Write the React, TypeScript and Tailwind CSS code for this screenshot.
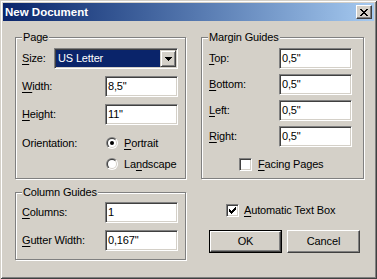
import React from "react";

const sunken =
  "border border-t-[#808080] border-l-[#808080] border-b-white border-r-white shadow-[inset_1px_1px_0_#404040,inset_-1px_-1px_0_#d4d0c8]";
const raised =
  "border border-t-white border-l-white border-b-[#404040] border-r-[#404040] shadow-[inset_-1px_-1px_0_#808080]";

function U({ children }: { children: React.ReactNode }) {
  return <span className="underline decoration-1 underline-offset-[2px]">{children}</span>;
}

function Edit({ value }: { value: string }) {
  return (
    <div className={`h-[21px] w-[73px] bg-white ${sunken} flex items-center pl-[2px]`}>{value}</div>
  );
}

function Pixels({ w, h, rows }: { w: number; h: number; rows: number[][][] }) {
  return (
    <svg width={w} height={h} viewBox={`0 0 ${w} ${h}`} shapeRendering="crispEdges">
      {rows.map((r, y) => r.map(([x, ww], i) => <rect key={`${y}-${i}`} x={x} y={y} width={ww} height={1} fill="#000" />))}
    </svg>
  );
}

const xRows = [
  [[0, 2], [6, 2]],
  [[1, 2], [5, 2]],
  [[2, 4]],
  [[3, 2]],
  [[2, 4]],
  [[1, 2], [5, 2]],
  [[0, 2], [6, 2]],
];
const checkRows = [
  [[6, 1]],
  [[5, 2]],
  [[0, 1], [4, 3]],
  [[0, 2], [3, 3]],
  [[0, 5]],
  [[1, 3]],
  [[2, 1]],
];
const arrowRows = [[[0, 7]], [[1, 5]], [[2, 3]], [[3, 1]]];

function Check({ checked }: { checked?: boolean }) {
  return (
    <div className={`h-[13px] w-[13px] bg-white ${sunken} flex items-center justify-center shrink-0`}>
      {checked && <Pixels w={7} h={7} rows={checkRows} />}
    </div>
  );
}

function Radio({ checked }: { checked?: boolean }) {
  return (
    <svg width="12" height="12" viewBox="0 0 12 12" className="shrink-0">
      <defs>
        <linearGradient id="rOut" x1="0" y1="0" x2="1" y2="1">
          <stop offset="0.5" stopColor="#808080" />
          <stop offset="0.5" stopColor="#ffffff" />
        </linearGradient>
        <linearGradient id="rIn" x1="0" y1="0" x2="1" y2="1">
          <stop offset="0.5" stopColor="#404040" />
          <stop offset="0.5" stopColor="#d4d0c8" />
        </linearGradient>
      </defs>
      <circle cx="6" cy="6" r="6" fill="url(#rOut)" />
      <circle cx="6" cy="6" r="5" fill="url(#rIn)" />
      <circle cx="6" cy="6" r="4" fill="#ffffff" />
      {checked && <circle cx="6" cy="6" r="2" fill="#000" />}
    </svg>
  );
}

function Group({
  title,
  className,
  children,
}: {
  title: string;
  className: string;
  children: React.ReactNode;
}) {
  return (
    <div className={`relative border border-[#808080] shadow-[inset_1px_1px_0_#fff,1px_1px_0_#fff] ${className}`}>
      <span className="absolute left-[6px] top-[-7px] px-[1px] bg-[#d4d0c8] leading-[13px]">{title}</span>
      {children}
    </div>
  );
}

function Combo() {
  return (
    <div className={`h-[21px] w-[124px] bg-white ${sunken} flex p-[1px]`}>
      <div className="flex-1 h-full bg-[#0a246a] text-white flex items-center pl-[2px]">US Letter</div>
      <div
        className={`w-[16px] h-full bg-[#d4d0c8] border border-t-[#d4d0c8] border-l-[#d4d0c8] border-b-[#404040] border-r-[#404040] shadow-[inset_1px_1px_0_#fff,inset_-1px_-1px_0_#808080] flex items-center justify-center`}
      >
        <Pixels w={7} h={4} rows={arrowRows} />
      </div>
    </div>
  );
}

function Row({ label, labelW, value, mt }: { label: React.ReactNode; labelW: string; value: string; mt: string }) {
  return (
    <div className={`flex items-center h-[21px] ${mt}`}>
      <div className={labelW}>{label}</div>
      <Edit value={value} />
    </div>
  );
}

export default function App() {
  return (
    <div className="w-[377px] h-[279px] bg-[#d4d0c8] p-[3px] flex flex-col font-['Liberation_Sans',Arial,sans-serif] text-[11px] leading-[13px] text-black tracking-[-0.15px] shadow-[inset_1px_1px_0_#d4d0c8,inset_-1px_-1px_0_#404040,inset_2px_2px_0_#fff,inset_-2px_-2px_0_#808080]">
      <div className="h-[18px] flex items-center bg-linear-to-r from-[#0a246a] to-[#a6caf0] pl-[2px] pr-[2px]">
        <span className="flex-1 text-white font-bold text-[11.5px] tracking-normal">New Document</span>
        <div className={`w-[16px] h-[14px] bg-[#d4d0c8] ${raised} flex items-center justify-center`}>
          <Pixels w={8} h={7} rows={xRows} />
        </div>
      </div>

      <div className="flex pt-[16px] pl-[12px] gap-[15px]">
        <div className="flex flex-col">
          <Group title="Page" className="w-[171px] h-[142px] pt-[10px] pl-[6px]">
            <div className="flex items-center h-[21px]">
              <div className="w-[32px]">
                <U>S</U>ize:
              </div>
              <Combo />
            </div>
            <Row label={<><U>W</U>idth:</>} labelW="w-[83px]" value={'8,5"'} mt="mt-[7px]" />
            <Row label={<><U>H</U>eight:</>} labelW="w-[83px]" value={'11"'} mt="mt-[7px]" />
            <div className="flex items-center h-[16px] mt-[10px]">
              <div className="w-[84px]">Orientation:</div>
              <Radio checked />
              <span className="ml-[6px]">
                <U>P</U>ortrait
              </span>
            </div>
            <div className="flex items-center h-[16px] mt-[5px] pl-[84px]">
              <Radio />
              <span className="ml-[6px]">
                La<U>n</U>dscape
              </span>
            </div>
          </Group>

          <Group title="Column Guides" className="w-[171px] h-[68px] mt-[13px] pt-[9px] pl-[6px]">
            <Row label={<><U>C</U>olumns:</>} labelW="w-[83px]" value="1" mt="" />
            <Row label={<><U>G</U>utter Width:</>} labelW="w-[83px]" value={'0,167"'} mt="mt-[7px]" />
          </Group>
        </div>

        <div className="flex flex-col">
          <Group title="Margin Guides" className="w-[163px] h-[142px] pt-[10px] pl-[7px]">
            <Row label={<><U>T</U>op:</>} labelW="w-[70px]" value={'0,5"'} mt="" />
            <Row label={<><U>B</U>ottom:</>} labelW="w-[70px]" value={'0,5"'} mt="mt-[5px]" />
            <Row label={<><U>L</U>eft:</>} labelW="w-[70px]" value={'0,5"'} mt="mt-[5px]" />
            <Row label={<><U>R</U>ight:</>} labelW="w-[70px]" value={'0,5"'} mt="mt-[5px]" />
            <div className="flex items-center h-[13px] mt-[11px] pl-[30px]">
              <Check />
              <span className="ml-[6px]">
                <U>F</U>acing Pages
              </span>
            </div>
          </Group>

          <div className="flex items-center h-[13px] mt-[25px] pl-[25px]">
            <Check checked />
            <span className="ml-[5px]">
              <U>A</U>utomatic Text Box
            </span>
          </div>

          <div className="flex mt-[13px] pl-[8px] gap-[5px]">
            <div className="w-[73px] h-[23px] border border-black">
              <div className={`w-full h-full bg-[#d4d0c8] ${raised} flex items-center justify-center`}>OK</div>
            </div>
            <div className={`w-[73px] h-[23px] bg-[#d4d0c8] ${raised} flex items-center justify-center`}>Cancel</div>
          </div>
        </div>
      </div>
    </div>
  );
}
